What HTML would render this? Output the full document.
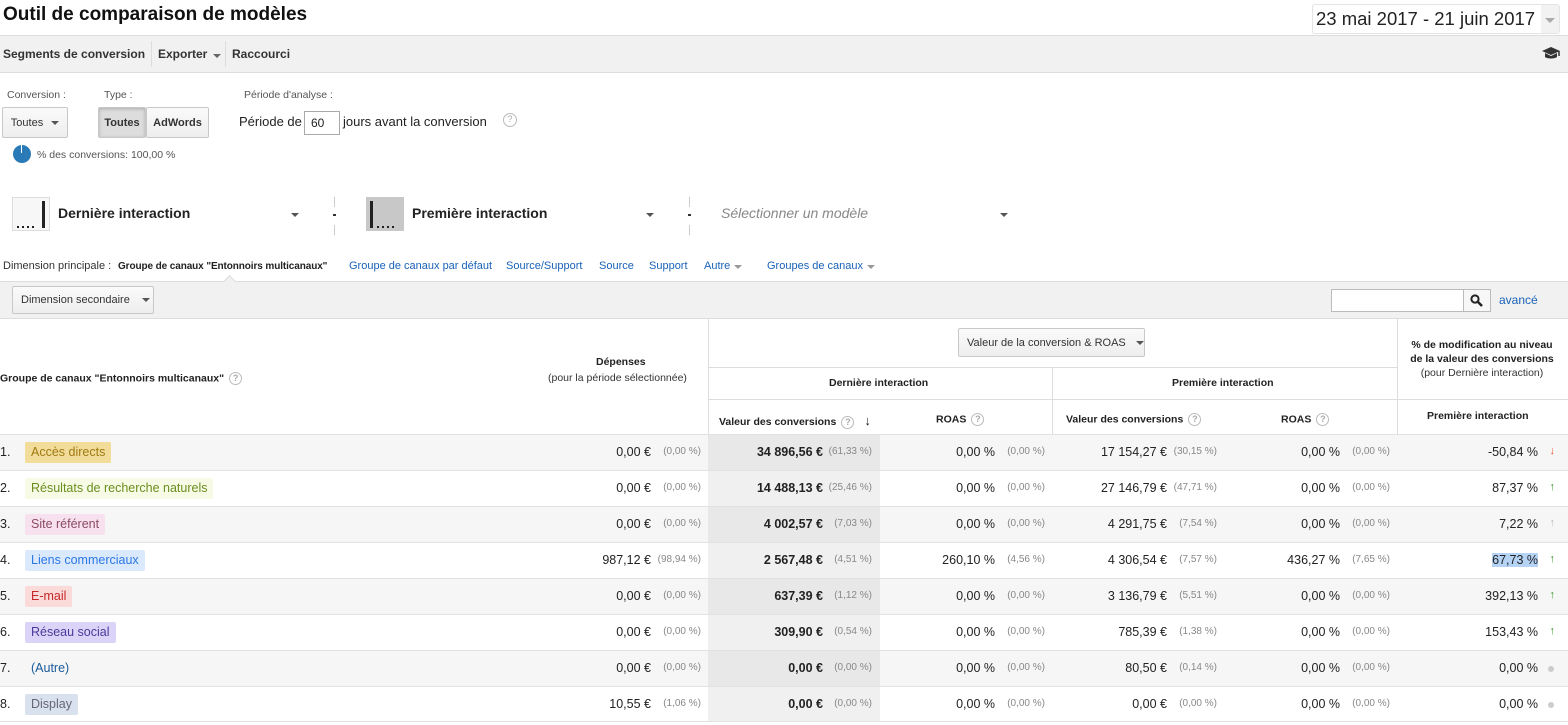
<!DOCTYPE html>
<html><head><meta charset="utf-8">
<style>
*{box-sizing:border-box;margin:0;padding:0}
body{width:1568px;height:725px;overflow:hidden;background:#fff;font-family:"Liberation Sans",Arial,sans-serif;color:#222;position:relative}
.abs{position:absolute;white-space:nowrap}
.btn{position:absolute;border:1px solid #c8c8c8;border-radius:2px;background:linear-gradient(#fafafa,#eee);font-size:11px;color:#333;display:flex;align-items:center;justify-content:center}
.tri{display:inline-block;width:0;height:0;border-left:4px solid transparent;border-right:4px solid transparent;border-top:4px solid #555;margin-left:8px}
.link{color:#1a62b8;font-size:11px}
.row{position:absolute;left:0;width:1568px;height:36px;border-top:1px solid #e2e2e2;font-size:12.5px}
.row.g{background:#f6f6f6}
.row .hl{position:absolute;left:708px;width:172px;top:0;bottom:0;background:#f0f0f0}
.row.g .hl{background:#e8e8e8}
.row .n{position:absolute;left:0;top:10px}
.chip{position:absolute;left:25px;top:7px;height:21px;padding:0 6px;line-height:21px;border-radius:2px;font-size:12.5px}
.v{position:absolute;top:10px;text-align:right}
.p{position:absolute;top:11px;font-size:10px;color:#888;text-align:right}
.b{font-weight:bold}
.ar{font-weight:bold;font-size:11px}
.q{display:inline-block;width:13px;height:13px;border:1px solid #bbb;border-radius:50%;font-size:9px;color:#aaa;text-align:center;line-height:11px;vertical-align:middle;margin-left:5px}
.hd{font-size:10.5px;font-weight:bold;color:#222}
.line{position:absolute;background:#ddd}
.dot{position:absolute;width:2px;height:2px;background:#222}
</style></head><body>

<div class="abs" style="left:3px;top:4px;font-size:19px;font-weight:bold;color:#111">Outil de comparaison de modèles</div>
<div class="abs" style="left:1312px;top:4px;width:248px;height:30px;border:1px solid #e4e4e4;border-radius:3px;font-size:18.5px;padding:3px 0 0 3px;color:#222">23 mai 2017 - 21 juin 2017<span style="position:absolute;right:0;top:0;width:18px;height:28px;background:#f2f2f2"></span><span style="position:absolute;right:4px;top:13px;border-left:5px solid transparent;border-right:5px solid transparent;border-top:5px solid #aaa"></span></div>

<div class="abs" style="left:0;top:35px;width:1568px;height:38px;background:#f1f1f1;border-top:1px solid #ddd;border-bottom:1px solid #ddd"></div>
<div class="abs" style="left:3px;top:47px;font-size:12px;font-weight:bold;color:#333">Segments de conversion</div>
<div class="line" style="left:151px;top:41px;width:1px;height:26px"></div>
<div class="abs" style="left:158px;top:47px;font-size:12px;font-weight:bold;color:#333">Exporter <span class="tri" style="margin-left:2px;border-top-color:#666"></span></div>
<div class="line" style="left:225px;top:41px;width:1px;height:26px"></div>
<div class="abs" style="left:232px;top:47px;font-size:12px;font-weight:bold;color:#333">Raccourci</div>
<svg class="abs" style="left:1541px;top:46px" width="20" height="14" viewBox="0 0 20 14"><path d="M10 1L1 5l9 4 9-4z" fill="#333"/><path d="M4 7v4c2 2 10 2 12 0V7l-6 3z" fill="#333"/><path d="M18 5v5" stroke="#333" stroke-width="1.5"/></svg>

<div class="abs" style="left:7px;top:89px;font-size:10.5px;color:#555">Conversion :</div>
<div class="abs" style="left:104px;top:89px;font-size:10.5px;color:#555">Type :</div>
<div class="abs" style="left:244px;top:89px;font-size:10.5px;color:#555">Période d'analyse :</div>
<div class="btn" style="left:2px;top:107px;width:66px;height:31px">Toutes<span class="tri"></span></div>
<div class="btn" style="left:98px;top:107px;width:48px;height:31px;background:#ddd;font-weight:bold;box-shadow:inset 0 1px 3px #aaa">Toutes</div>
<div class="btn" style="left:146px;top:107px;width:63px;height:31px;font-weight:bold">AdWords</div>
<div class="abs" style="left:239px;top:114px;font-size:13px">Période de</div>
<div class="abs" style="left:304px;top:111px;width:36px;height:24px;border:1px solid #aaa;font-size:12px;padding:4px 0 0 6px">60</div>
<div class="abs" style="left:343px;top:114px;font-size:13px">jours avant la conversion</div>
<div class="abs" style="left:498px;top:111px"><span class="q" style="width:14px;height:14px">?</span></div>
<div class="abs" style="left:13px;top:145px;width:18px;height:18px;border-radius:50%;background:#2a7ab8"></div>
<div class="abs" style="left:21px;top:145px;width:1px;height:8px;background:#fff"></div>
<div class="abs" style="left:37px;top:149px;font-size:10.5px;color:#555">% des conversions: 100,00 %</div>

<div class="abs" style="left:12px;top:197px;width:38px;height:34px;border:1px solid #ddd;background:#f7f7f7"></div>
<div class="dot" style="left:17px;top:226px"></div><div class="dot" style="left:22px;top:226px"></div><div class="dot" style="left:27px;top:226px"></div><div class="dot" style="left:32px;top:226px"></div>
<div class="abs" style="left:42px;top:201px;width:3px;height:27px;background:#222"></div>
<div class="abs" style="left:58px;top:205px;font-size:14px;font-weight:bold">Dernière interaction</div>
<div class="abs" style="left:291px;top:213px;border-left:4px solid transparent;border-right:4px solid transparent;border-top:4px solid #555"></div>
<div class="line" style="left:334px;top:197px;width:1px;height:10px;background:#ccc"></div>
<div class="abs" style="left:333px;top:214px;width:3px;height:2px;background:#333"></div>
<div class="line" style="left:334px;top:225px;width:1px;height:10px;background:#ccc"></div>
<div class="abs" style="left:366px;top:197px;width:38px;height:34px;background:#c8c8c8"></div>
<div class="abs" style="left:370px;top:201px;width:3px;height:27px;background:#222"></div>
<div class="dot" style="left:377px;top:226px"></div><div class="dot" style="left:382px;top:226px"></div><div class="dot" style="left:387px;top:226px"></div><div class="dot" style="left:392px;top:226px"></div>
<div class="abs" style="left:412px;top:205px;font-size:14px;font-weight:bold">Première interaction</div>
<div class="abs" style="left:646px;top:213px;border-left:4px solid transparent;border-right:4px solid transparent;border-top:4px solid #555"></div>
<div class="line" style="left:689px;top:197px;width:1px;height:10px;background:#ccc"></div>
<div class="abs" style="left:688px;top:214px;width:3px;height:2px;background:#333"></div>
<div class="line" style="left:689px;top:225px;width:1px;height:10px;background:#ccc"></div>
<div class="abs" style="left:721px;top:205px;font-size:14px;font-style:italic;color:#888">Sélectionner un modèle</div>
<div class="abs" style="left:1000px;top:213px;border-left:4px solid transparent;border-right:4px solid transparent;border-top:4px solid #555"></div>

<div class="abs" style="left:3px;top:260px;font-size:11px;color:#333">Dimension principale :</div>
<div class="abs" style="left:118px;top:261px;font-size:10px;font-weight:bold;color:#222;letter-spacing:-0.1px">Groupe de canaux "Entonnoirs multicanaux"</div>
<div class="abs link" style="left:349px;top:260px">Groupe de canaux par défaut</div>
<div class="abs link" style="left:506px;top:260px">Source/Support</div>
<div class="abs link" style="left:599px;top:260px">Source</div>
<div class="abs link" style="left:649px;top:260px">Support</div>
<div class="abs link" style="left:704px;top:260px">Autre<span class="tri" style="margin-left:4px;border-top-color:#999"></span></div>
<div class="abs link" style="left:767px;top:260px">Groupes de canaux<span class="tri" style="margin-left:4px;border-top-color:#999"></span></div>

<div class="abs" style="left:0;top:281px;width:1568px;height:38px;background:#f1f1f1;border-top:1px solid #ddd;border-bottom:1px solid #ddd"></div>
<div class="abs" style="left:225px;top:277px;width:9px;height:9px;background:#f1f1f1;border-left:1px solid #ddd;border-top:1px solid #ddd;transform:rotate(45deg)"></div>
<div class="btn" style="left:12px;top:286px;width:142px;height:28px;justify-content:flex-start;padding-left:8px">Dimension secondaire<span class="tri" style="margin-left:12px"></span></div>
<div class="abs" style="left:1331px;top:289px;width:133px;height:23px;background:#fff;border:1px solid #bbb"></div>
<div class="abs" style="left:1463px;top:289px;width:28px;height:23px;background:#f7f7f7;border:1px solid #bbb"></div>
<svg class="abs" style="left:1470px;top:294px" width="13" height="13" viewBox="0 0 13 13"><circle cx="5" cy="5" r="3.6" fill="none" stroke="#222" stroke-width="2"/><path d="M8 8l4 4" stroke="#222" stroke-width="2.5"/></svg>
<div class="abs" style="left:1499px;top:293px;font-size:12px;color:#1a62b8">avancé</div>

<!-- header -->
<div class="line" style="left:708px;top:319px;width:1px;height:116px"></div>
<div class="line" style="left:1397px;top:319px;width:1px;height:116px"></div>
<div class="line" style="left:1052px;top:367px;width:1px;height:68px"></div>
<div class="line" style="left:708px;top:367px;width:689px;height:1px"></div>
<div class="line" style="left:708px;top:399px;width:860px;height:1px"></div>
<div class="abs hd" style="left:0;top:372px">Groupe de canaux "Entonnoirs multicanaux"<span class="q">?</span></div>
<div class="abs hd" style="left:596px;top:356px">Dépenses</div>
<div class="abs" style="left:548px;top:372px;font-size:10.5px;color:#333">(pour la période sélectionnée)</div>
<div class="btn" style="left:958px;top:328px;width:187px;height:29px;justify-content:flex-start;padding-left:8px">Valeur de la conversion &amp; ROAS<span class="tri" style="margin-left:10px"></span></div>
<div class="abs hd" style="left:829px;top:377px">Dernière interaction</div>
<div class="abs hd" style="left:1172px;top:377px">Première interaction</div>
<div class="abs hd" style="left:1406px;top:338px;width:152px;white-space:normal;text-align:center;line-height:14px">% de modification au niveau de la valeur des conversions<br><span style="font-weight:normal;color:#333">(pour Dernière interaction)</span></div>
<div class="abs hd" style="left:719px;top:413px">Valeur des conversions<span class="q">?</span><span style="margin-left:10px;font-size:13px;font-weight:normal">↓</span></div>
<div class="abs hd" style="left:936px;top:413px">ROAS<span class="q">?</span></div>
<div class="abs hd" style="left:1066px;top:413px">Valeur des conversions<span class="q">?</span></div>
<div class="abs hd" style="left:1281px;top:413px">ROAS<span class="q">?</span></div>
<div class="abs hd" style="left:1427px;top:410px">Première interaction</div>

<!-- rows -->
<div class="row g" style="top:434px"><div class="hl"></div><span class="n">1.</span><span class="chip" style="background:#f1dc9a;color:#a07a12">Accès directs</span>
<span class="v" style="right:917px">0,00 €</span><span class="p" style="right:867px">(0,00 %)</span>
<span class="v b" style="right:745px">34 896,56 €</span><span class="p" style="right:696px">(61,33 %)</span>
<span class="v" style="right:573px">0,00 %</span><span class="p" style="right:523px">(0,00 %)</span>
<span class="v" style="right:401px">17 154,27 €</span><span class="p" style="right:351px">(30,15 %)</span>
<span class="v" style="right:228px">0,00 %</span><span class="p" style="right:178px">(0,00 %)</span>
<span class="v" style="right:30px">-50,84 %</span><span class="v ar" style="right:13px;color:#e53">↓</span></div>

<div class="row" style="top:470px"><div class="hl"></div><span class="n">2.</span><span class="chip" style="background:#f7fbe6;color:#6b8e1f">Résultats de recherche naturels</span>
<span class="v" style="right:917px">0,00 €</span><span class="p" style="right:867px">(0,00 %)</span>
<span class="v b" style="right:745px">14 488,13 €</span><span class="p" style="right:696px">(25,46 %)</span>
<span class="v" style="right:573px">0,00 %</span><span class="p" style="right:523px">(0,00 %)</span>
<span class="v" style="right:401px">27 146,79 €</span><span class="p" style="right:351px">(47,71 %)</span>
<span class="v" style="right:228px">0,00 %</span><span class="p" style="right:178px">(0,00 %)</span>
<span class="v" style="right:30px">87,37 %</span><span class="v ar" style="right:13px;color:#3a9a2a">↑</span></div>

<div class="row g" style="top:506px"><div class="hl"></div><span class="n">3.</span><span class="chip" style="background:#f8e1ee;color:#8a4a62">Site référent</span>
<span class="v" style="right:917px">0,00 €</span><span class="p" style="right:867px">(0,00 %)</span>
<span class="v b" style="right:745px">4 002,57 €</span><span class="p" style="right:696px">(7,03 %)</span>
<span class="v" style="right:573px">0,00 %</span><span class="p" style="right:523px">(0,00 %)</span>
<span class="v" style="right:401px">4 291,75 €</span><span class="p" style="right:351px">(7,54 %)</span>
<span class="v" style="right:228px">0,00 %</span><span class="p" style="right:178px">(0,00 %)</span>
<span class="v" style="right:30px">7,22 %</span><span class="v ar" style="right:13px;color:#bbb">↑</span></div>

<div class="row" style="top:542px"><div class="hl"></div><span class="n">4.</span><span class="chip" style="background:#dbe9fd;color:#2b78e4">Liens commerciaux</span>
<span class="v" style="right:917px">987,12 €</span><span class="p" style="right:867px">(98,94 %)</span>
<span class="v b" style="right:745px">2 567,48 €</span><span class="p" style="right:696px">(4,51 %)</span>
<span class="v" style="right:573px">260,10 %</span><span class="p" style="right:523px">(4,56 %)</span>
<span class="v" style="right:401px">4 306,54 €</span><span class="p" style="right:351px">(7,57 %)</span>
<span class="v" style="right:228px">436,27 %</span><span class="p" style="right:178px">(7,65 %)</span>
<span class="v" style="right:30px;background:#b4d3f5">67,73 %</span><span class="v ar" style="right:13px;color:#3a9a2a">↑</span></div>

<div class="row g" style="top:578px"><div class="hl"></div><span class="n">5.</span><span class="chip" style="background:#fbdada;color:#c62828">E-mail</span>
<span class="v" style="right:917px">0,00 €</span><span class="p" style="right:867px">(0,00 %)</span>
<span class="v b" style="right:745px">637,39 €</span><span class="p" style="right:696px">(1,12 %)</span>
<span class="v" style="right:573px">0,00 %</span><span class="p" style="right:523px">(0,00 %)</span>
<span class="v" style="right:401px">3 136,79 €</span><span class="p" style="right:351px">(5,51 %)</span>
<span class="v" style="right:228px">0,00 %</span><span class="p" style="right:178px">(0,00 %)</span>
<span class="v" style="right:30px">392,13 %</span><span class="v ar" style="right:13px;color:#3a9a2a">↑</span></div>

<div class="row" style="top:614px"><div class="hl"></div><span class="n">6.</span><span class="chip" style="background:#dcd4f8;color:#4a3a9a">Réseau social</span>
<span class="v" style="right:917px">0,00 €</span><span class="p" style="right:867px">(0,00 %)</span>
<span class="v b" style="right:745px">309,90 €</span><span class="p" style="right:696px">(0,54 %)</span>
<span class="v" style="right:573px">0,00 %</span><span class="p" style="right:523px">(0,00 %)</span>
<span class="v" style="right:401px">785,39 €</span><span class="p" style="right:351px">(1,38 %)</span>
<span class="v" style="right:228px">0,00 %</span><span class="p" style="right:178px">(0,00 %)</span>
<span class="v" style="right:30px">153,43 %</span><span class="v ar" style="right:13px;color:#3a9a2a">↑</span></div>

<div class="row g" style="top:650px"><div class="hl"></div><span class="n">7.</span><span class="chip" style="color:#1a5a9a;background:none">(Autre)</span>
<span class="v" style="right:917px">0,00 €</span><span class="p" style="right:867px">(0,00 %)</span>
<span class="v b" style="right:745px">0,00 €</span><span class="p" style="right:696px">(0,00 %)</span>
<span class="v" style="right:573px">0,00 %</span><span class="p" style="right:523px">(0,00 %)</span>
<span class="v" style="right:401px">80,50 €</span><span class="p" style="right:351px">(0,14 %)</span>
<span class="v" style="right:228px">0,00 %</span><span class="p" style="right:178px">(0,00 %)</span>
<span class="v" style="right:30px">0,00 %</span><span class="abs" style="right:14px;top:15px;width:6px;height:6px;border-radius:50%;background:#ccc"></span></div>

<div class="row" style="top:686px;border-bottom:1px solid #e2e2e2"><div class="hl"></div><span class="n">8.</span><span class="chip" style="background:#d9e1ee;color:#667">Display</span>
<span class="v" style="right:917px">10,55 €</span><span class="p" style="right:867px">(1,06 %)</span>
<span class="v b" style="right:745px">0,00 €</span><span class="p" style="right:696px">(0,00 %)</span>
<span class="v" style="right:573px">0,00 %</span><span class="p" style="right:523px">(0,00 %)</span>
<span class="v" style="right:401px">0,00 €</span><span class="p" style="right:351px">(0,00 %)</span>
<span class="v" style="right:228px">0,00 %</span><span class="p" style="right:178px">(0,00 %)</span>
<span class="v" style="right:30px">0,00 %</span><span class="abs" style="right:14px;top:15px;width:6px;height:6px;border-radius:50%;background:#ccc"></span></div>

</body></html>
